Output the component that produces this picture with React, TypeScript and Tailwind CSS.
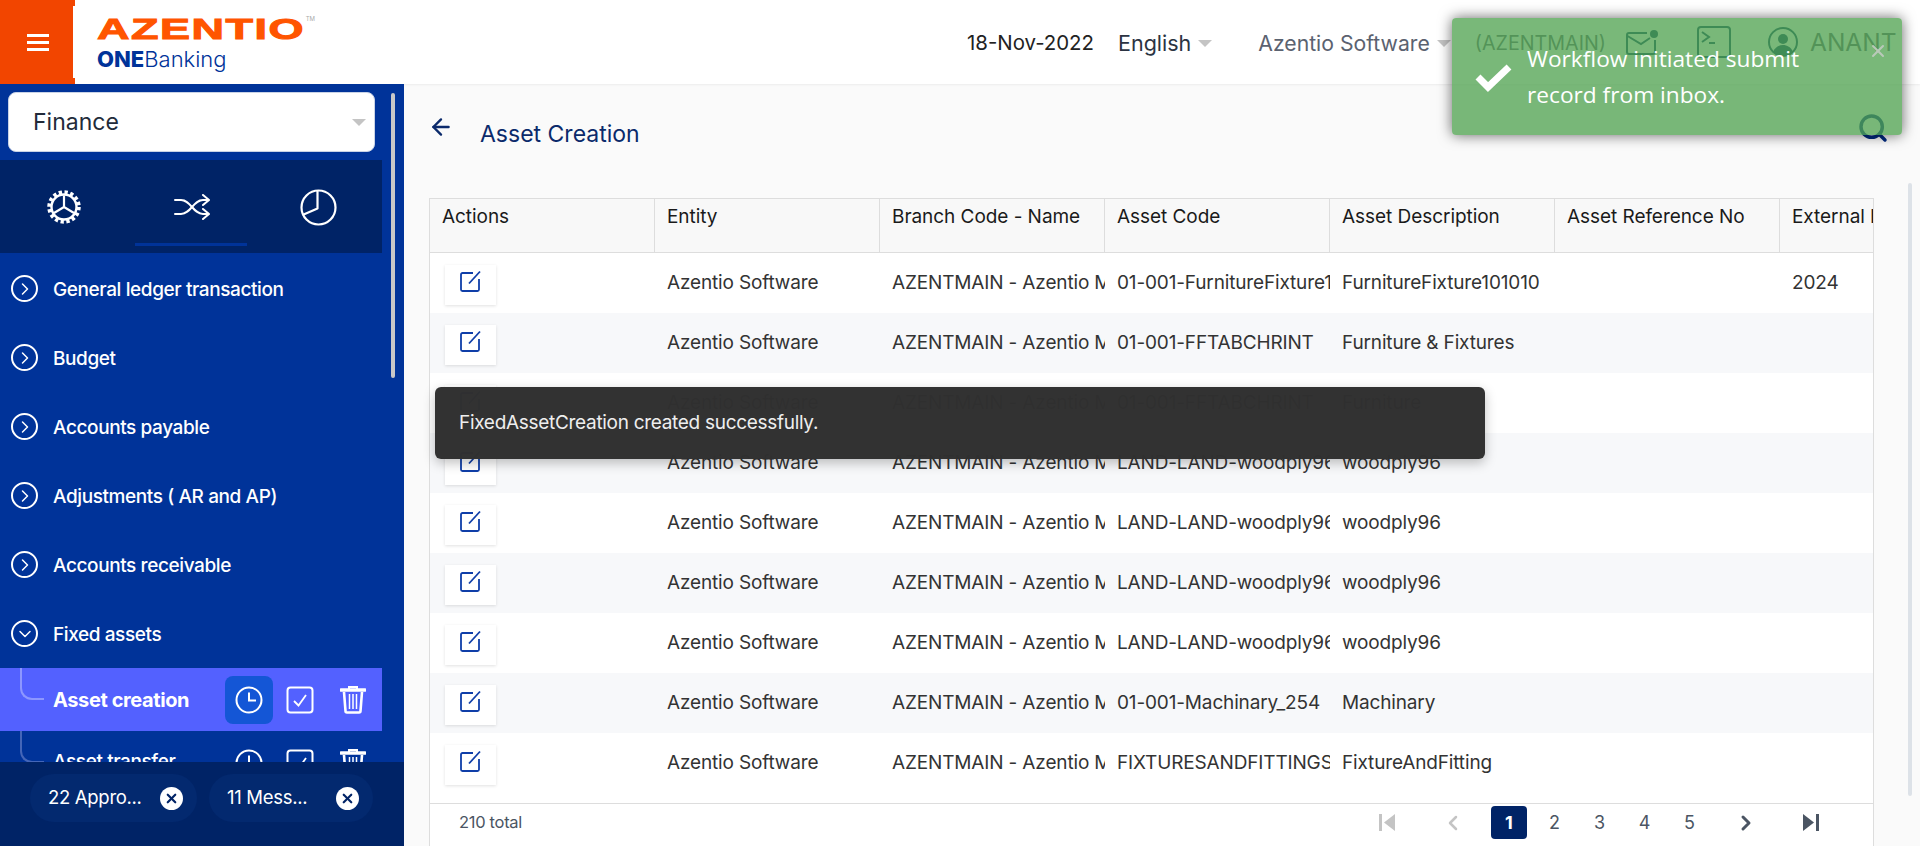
import { ChevronDown, ChevronLeft, ChevronRight, ArrowLeft, Search, X } from "lucide-react";

const menuItems = [
  "General ledger transaction",
  "Budget",
  "Accounts payable",
  "Adjustments ( AR and AP)",
  "Accounts receivable",
];

const columns = ["Actions", "Entity", "Branch Code - Name", "Asset Code", "Asset Description", "Asset Reference No", "External I"];

const rows = [
  { code: "01-001-FurnitureFixture101010", desc: "FurnitureFixture101010", year: "2024" },
  { code: "01-001-FFTABCHRINT", desc: "Furniture & Fixtures", year: "" },
  { code: "01-001-FFTABCHRINT", desc: "Furniture", year: "" },
  { code: "LAND-LAND-woodply96", desc: "woodply96", year: "" },
  { code: "LAND-LAND-woodply96", desc: "woodply96", year: "" },
  { code: "LAND-LAND-woodply96", desc: "woodply96", year: "" },
  { code: "LAND-LAND-woodply96", desc: "woodply96", year: "" },
  { code: "01-001-Machinary_254", desc: "Machinary", year: "" },
  { code: "FIXTURESANDFITTINGS-001", desc: "FixtureAndFitting", year: "" },
];

function Caret() {
  return <span className="inline-block h-0 w-0 border-x-[7px] border-t-[7px] border-x-transparent border-t-[#c4c4c4]" />;
}

function GearIcon() {
  return (
    <svg width="36" height="36" viewBox="0 0 36 36" fill="none" stroke="white">
      <circle cx="18" cy="18" r="14.5" strokeWidth="4.5" strokeDasharray="3.2 2.5" />
      <circle cx="18" cy="18" r="12.5" strokeWidth="2.4" />
      <path d="M18 18V6.500M18 18L8 24M18 18l10 6" strokeWidth="2.2" />
    </svg>
  );
}

function ShuffleIcon() {
  return (
    <svg width="36" height="26" viewBox="0 0 36 26" fill="none" stroke="white" strokeWidth="2" strokeLinecap="round" strokeLinejoin="round">
      <path d="M1 6h6c5 0 8 3.500 11 7s6 7 11 7h5" />
      <path d="M1 20h6c5 0 8-3.500 11-7s6-7 11-7h5" />
      <path d="M29 1l6 5-6 5M29 15l6 5-6 5" />
    </svg>
  );
}

function PieIcon() {
  return (
    <svg width="38" height="38" viewBox="0 0 38 38" fill="none" stroke="white" strokeWidth="2.2">
      <circle cx="19.5" cy="19.5" r="17" />
      <path d="M18.500 2v18.500L3.500 27" strokeLinejoin="round" />
    </svg>
  );
}

function CircleChevron({ open }: { open?: boolean }) {
  return (
    <span className="flex h-[27px] w-[27px] shrink-0 items-center justify-center rounded-full border-2 border-white">
      {open ? <ChevronDown size={20} strokeWidth={1.8} /> : <ChevronRight size={20} strokeWidth={1.8} />}
    </span>
  );
}

function ClockIcon() {
  return (
    <svg width="28" height="28" viewBox="0 0 28 28" fill="none" stroke="white" strokeWidth="2">
      <circle cx="14" cy="14" r="12.500" />
      <path d="M14 6.500V14.500H21" />
    </svg>
  );
}

function CheckBoxIcon() {
  return (
    <svg width="28" height="28" viewBox="0 0 28 28" fill="none" stroke="white" strokeWidth="2">
      <rect x="1.500" y="1.500" width="25" height="25" rx="3" />
      <path d="M8 15l4.500 4.500L20 9" strokeWidth="1.800" />
    </svg>
  );
}

function TrashIcon() {
  return (
    <svg width="26" height="29" viewBox="0 0 26 29" fill="none" stroke="white">
      <path d="M9 4V2h8v2" strokeWidth="2" />
      <path d="M1 5h24" strokeWidth="3.500" strokeLinecap="round" />
      <path d="M4 7l1.500 19a1.500 1.500 0 0 0 1.500 1.500h12a1.500 1.500 0 0 0 1.500-1.500L22 7" strokeWidth="2.600" />
      <path d="M9.500 9v15M13 9v15M16.500 9v15" strokeWidth="1.500" />
    </svg>
  );
}

function TreeLine({ active }: { active?: boolean }) {
  return (
    <span
      className={
        active
          ? "absolute left-[20px] top-0 h-[32px] w-[24px] rounded-bl-[12px] border-b-2 border-l-2 border-[#8d97ff]"
          : "absolute left-[20px] top-0 h-[32px] w-[24px] rounded-bl-[12px] border-b-2 border-l-2 border-[#4466b8]"
      }
    />
  );
}

function SubRow({ label, active }: { label: string; active?: boolean }) {
  return (
    <div className={active ? "relative flex h-[63px] items-center bg-[#5361ff]" : "relative flex h-[63px] items-center"}>
      <TreeLine active={active} />
      <span className={active ? "ml-[53px] w-[172px] text-[20px] font-bold tracking-[-0.4px] text-white" : "ml-[53px] w-[172px] text-[19px] font-medium tracking-[-0.4px] text-white"}>
        {label}
      </span>
      <span className={active ? "flex h-12 w-12 items-center justify-center rounded-lg bg-[#1456d6]" : "flex h-12 w-12 items-center justify-center"}>
        <ClockIcon />
      </span>
      <span className="ml-[13px] flex"><CheckBoxIcon /></span>
      <span className="ml-[26px] flex"><TrashIcon /></span>
    </div>
  );
}

function Chip({ label }: { label: string }) {
  return (
    <div className="flex h-12 items-center justify-between rounded-full bg-[#03296f] pl-[18px] pr-[14px] text-[18.500px] tracking-[-0.3px] text-white">
      <span>{label}</span>
      <span className="ml-3 flex h-[23px] w-[23px] items-center justify-center rounded-full bg-white">
        <X size={15} strokeWidth={3.5} className="text-[#002366]" />
      </span>
    </div>
  );
}

function Sidebar() {
  return (
    <aside className="flex h-full w-[404px] shrink-0 flex-col bg-[#003399] text-white">
      <div className="flex min-h-0 flex-1">
        <div className="w-[382px] shrink-0 overflow-hidden">
          <div className="px-[8px] pt-[8px]">
            <div className="flex h-[60px] w-[367px] items-center justify-between rounded-lg border border-[#c9d3e6] bg-white pl-6 pr-2 text-[23px] text-[#222b3a]">
              <span>Finance</span>
              <Caret />
            </div>
          </div>
          <div className="mt-[8px] flex h-[93px] items-center bg-[#002366]">
            <div className="flex w-[128px] justify-center"><GearIcon /></div>
            <div className="relative flex h-full w-[127px] items-center justify-center">
              <ShuffleIcon />
              <span className="absolute bottom-[7px] left-[7px] h-[3px] w-[112px] bg-[#003399]" />
            </div>
            <div className="flex w-[125px] justify-center"><PieIcon /></div>
          </div>
          <div className="pt-px">
            {menuItems.map((item) => (
              <div key={item} className="flex h-[69px] items-center gap-[15px] pl-[11px] text-[19px] font-medium tracking-[-0.4px]">
                <CircleChevron />
                <span className="pt-[3px]">{item}</span>
              </div>
            ))}
            <div className="flex h-[69px] items-center gap-[15px] pl-[11px] text-[19px] font-medium tracking-[-0.4px]">
              <CircleChevron open />
              <span className="pt-[3px]">Fixed assets</span>
            </div>
            <SubRow label="Asset creation" active />
            <SubRow label="Asset transfer" />
          </div>
        </div>
        <div className="pl-[9px] pt-[9px]">
          <div className="h-[285px] w-[4px] rounded-full bg-[#c8c8c8]" />
        </div>
      </div>
      <div className="flex h-[84px] shrink-0 items-start gap-3 bg-[#002366] pl-[30px] pt-3">
        <div className="w-[167px]"><Chip label="22 Appro..." /></div>
        <div className="w-[164px]"><Chip label="11 Mess..." /></div>
      </div>
    </aside>
  );
}

function EditIcon() {
  return (
    <svg width="24" height="24" viewBox="0 0 24 24" fill="none" stroke="#0f3ea8" strokeWidth="1.800">
      <path d="M14 4H3.500A1.500 1.500 0 0 0 2 5.500V20.500A1.500 1.500 0 0 0 3.500 22H18.500A1.500 1.500 0 0 0 20 20.500V10" />
      <path d="M10 14.500L21 2.500" />
    </svg>
  );
}

function Header() {
  return (
    <header className="flex h-[84px] shrink-0 items-center bg-white shadow-[0_1px_2px_rgba(0,0,0,0.06)]">
      <div className="relative flex h-full w-[75px] shrink-0 flex-col items-center justify-center gap-[4px] bg-[#f24500]">
        <span className="h-[3px] w-[22px] bg-white" />
        <span className="h-[3px] w-[22px] bg-white" />
        <span className="h-[3px] w-[22px] bg-white" />
        <span className="absolute right-0 top-[6px] h-[72px] w-[2px] bg-white" />
      </div>
      <div className="ml-[22px] flex w-[240px] shrink-0 flex-col">
        <div className="flex items-start">
          <span className="inline-block h-[34px] origin-left scale-x-[1.5] font-['Liberation_Sans',sans-serif] text-[30px] font-bold leading-[34px] tracking-[1px] text-[#ff5500] [-webkit-text-stroke:1px_#ff5500]">AZENTIO</span>
          <span className="ml-[70px] mt-[2px] text-[6px] text-[#aaa]">TM</span>
        </div>
        <span className="text-[22px] leading-[26px] text-[#003399]"><b className="font-extrabold">ONE</b><span className="font-light">Banking</span></span>
      </div>
      <span className="ml-[630px] mt-[3px] text-[20.400px] text-[#222]">18-Nov-2022</span>
      <span className="ml-[24px] mt-[3px] text-[21.500px] text-[#2b3342]">English</span>
      <span className="ml-[7px] mt-[3px] flex"><Caret /></span>
      <span className="ml-[46px] mt-[3px] text-[21.200px] text-[#5b6270]">Azentio Software</span>
      <span className="ml-[7px] mt-[3px] flex"><Caret /></span>
      <span className="ml-[24px] mt-[3px] text-[19.700px] text-[#5b6270]">(AZENTMAIN)</span>
      <svg className="ml-[20px] mt-[2px]" width="32" height="26" viewBox="0 0 32 26" fill="none" stroke="#003c66" strokeWidth="2">
        <path d="M21 3H3a2 2 0 0 0-2 2V22a2 2 0 0 0 2 2H27a2 2 0 0 0 2-2V10" />
        <path d="M1.500 6L15 14L24 8" />
        <circle cx="28" cy="4" r="4" fill="#003c66" stroke="none" />
      </svg>
      <svg className="ml-[39px]" width="34" height="32" viewBox="0 0 34 32" fill="none" stroke="#003c66" strokeWidth="2">
        <rect x="1" y="1" width="32" height="30" rx="3" />
        <path d="M5 6l7 5-7 5M12 17h6" />
      </svg>
      <svg className="ml-[37px]" width="30" height="30" viewBox="0 0 30 30" fill="none" stroke="#003c66" strokeWidth="2">
        <circle cx="15" cy="15" r="14" />
        <circle cx="15" cy="12" r="5" fill="#003c66" stroke="none" />
        <path d="M5 25c2-5 6-7 10-7s8 2 10 7c-3 3-6 4-10 4s-7-1-10-4z" fill="#003c66" stroke="none" />
      </svg>
      <span className="ml-[12px] whitespace-nowrap text-[24.500px] text-[#5b6270]">ANANT</span>
    </header>
  );
}

function Table() {
  return (
    <div className="flex min-h-0 flex-1 flex-col border-x border-[#dddddd]">
      <div className="flex h-[55px] shrink-0 border-y border-[#dddddd] bg-[#f8f8f8]">
        {columns.map((col, i) => (
          <div key={col} className={i === 6 ? "w-[93px] shrink-0 overflow-hidden whitespace-nowrap pl-[12px] pt-[4px] text-[19px] tracking-[-0.05px] text-[#1a1a1a]" : "w-[225px] shrink-0 overflow-hidden whitespace-nowrap border-r border-[#dddddd] pl-[12px] pt-[4px] text-[19px] tracking-[-0.05px] text-[#1a1a1a]"}>
            {col}
          </div>
        ))}
      </div>
      <div className="flex-1 bg-white">
        {rows.map((row, i) => (
          <div key={i} className={i % 2 === 1 ? "flex h-[60px] items-center bg-[#f7f8fa] text-[19px] tracking-[-0.15px] text-[#333333]" : "flex h-[60px] items-center bg-white text-[19px] tracking-[-0.15px] text-[#333333]"}>
            <div className="w-[225px] shrink-0 pl-[15px]">
              <div className="mt-[4px] flex h-[40px] w-[51px] items-start justify-center bg-white pt-[4px] shadow-[0_1px_3px_rgba(0,0,0,0.12)]"><EditIcon /></div>
            </div>
            <div className="w-[225px] shrink-0 overflow-hidden whitespace-nowrap pl-[12px]">Azentio Software</div>
            <div className="w-[225px] shrink-0 overflow-hidden whitespace-nowrap pl-[12px]">AZENTMAIN - Azentio Main Branch</div>
            <div className="w-[225px] shrink-0 overflow-hidden whitespace-nowrap pl-[12px]">{row.code}</div>
            <div className="w-[225px] shrink-0 overflow-hidden whitespace-nowrap pl-[12px]">{row.desc}</div>
            <div className="w-[225px] shrink-0" />
            <div className="w-[93px] shrink-0 overflow-hidden pl-[12px]">{row.year}</div>
          </div>
        ))}
      </div>
      <div className="flex h-[43px] shrink-0 items-center border-t border-[#dddddd] bg-white pb-[5px] pl-[29px] pr-[54px] text-[16.500px] text-[#4b5563]">
        <span className="tracking-[-0.3px]">210 total</span>
        <div className="ml-auto flex items-center text-[18px]">
          <svg width="17" height="17" viewBox="0 0 17 17" fill="#c4c4c4"><rect x="0" y="0" width="3" height="17" /><path d="M16 0V17L5 8.500z" /></svg>
          <ChevronLeft size={24} strokeWidth={2.5} className="ml-[45px] text-[#c4c4c4]" />
          <span className="ml-[26px] flex h-[33px] w-[36px] items-center justify-center rounded-[4px] bg-[#002366] font-bold text-white">1</span>
          <span className="w-[5px]" />
          {["2", "3", "4", "5"].map((n) => (
            <span key={n} className="flex w-[45px] justify-center text-[#4b5563]">{n}</span>
          ))}
          <ChevronRight size={24} strokeWidth={3} className="ml-[22px] text-[#4b5563]" />
          <svg className="ml-[44px]" width="17" height="17" viewBox="0 0 17 17" fill="#4b5563"><path d="M1 0V17L12 8.500z" /><rect x="14" y="0" width="3" height="17" /></svg>
        </div>
      </div>
    </div>
  );
}

export default function App() {
  return (
    <div className="relative flex h-screen w-full flex-col overflow-hidden bg-[#fafafa] font-[Inter,sans-serif]">
      <Header />
      <div className="flex min-h-0 flex-1">
        <Sidebar />
        <main className="flex min-w-0 flex-1 flex-col pl-[25px] pr-[46px]">
          <div className="flex h-[114px] shrink-0 items-start text-[#0b2a6b]">
            <ArrowLeft size={26} strokeWidth={2.2} className="mt-[30px] -ml-px" />
            <span className="ml-[26px] mt-[34px] text-[23px] leading-[32px]">Asset Creation</span>
            <Search size={32} strokeWidth={2.6} className="ml-auto mr-[-15px] mt-[28px] text-[#002a80]" />
          </div>
          <Table />
        </main>
        <div className="absolute right-[8px] top-[183px] h-[613px] w-[4px] rounded-full bg-[#dde2e8]" />
      </div>

      <div className="absolute left-[435px] top-[387px] flex h-[72px] w-[1050px] items-center rounded-[6px] bg-[#303030]/99 pl-6 text-[19px] tracking-[-0.3px] text-[#eeeeee] shadow-[0_4px_12px_rgba(0,0,0,0.25)]">
        FixedAssetCreation created successfully.
      </div>

      <div className="absolute left-[1452px] top-[18px] flex h-[117px] w-[450px] items-center rounded-[4px] bg-[#51a351]/77 pl-[23px] font-['Open_Sans',sans-serif] text-[22.700px] leading-[36px] text-white shadow-[0_0_14px_rgba(0,0,0,0.6)]">
        <svg width="37" height="30" viewBox="0 0 37 30" fill="none" stroke="white" strokeWidth="7"><path d="M3 15l10 10L34 5" /></svg>
        <span className="ml-[15px] w-[320px]">Workflow initiated submit record from inbox.</span>
        <X size={20} strokeWidth={2.5} className="absolute right-[14px] top-[23px] text-[#b9c9b9]" />
      </div>
    </div>
  );
}
